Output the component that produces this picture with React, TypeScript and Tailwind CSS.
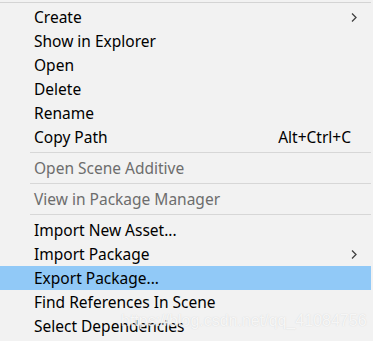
import React from "react";

type Item =
  | { kind: "item"; label: string; disabled?: boolean; shortcut?: string; sub?: boolean; active?: boolean }
  | { kind: "sep" };

const items: Item[] = [
  { kind: "item", label: "Create", sub: true },
  { kind: "item", label: "Show in Explorer" },
  { kind: "item", label: "Open" },
  { kind: "item", label: "Delete" },
  { kind: "item", label: "Rename" },
  { kind: "item", label: "Copy Path", shortcut: "Alt+Ctrl+C" },
  { kind: "sep" },
  { kind: "item", label: "Open Scene Additive", disabled: true },
  { kind: "sep" },
  { kind: "item", label: "View in Package Manager", disabled: true },
  { kind: "sep" },
  { kind: "item", label: "Import New Asset..." },
  { kind: "item", label: "Import Package", sub: true },
  { kind: "item", label: "Export Package...", active: true },
  { kind: "item", label: "Find References In Scene" },
  { kind: "item", label: "Select Dependencies" },
];

function Chevron() {
  return (
    <svg width="6" height="9" viewBox="0 0 6 9" className="block">
      <path d="M1 0.5 L5 4.5 L1 8.5" fill="none" stroke="#404040" strokeWidth="1.3" />
    </svg>
  );
}

export default function App() {
  return (
    <div
      className="relative w-[373px] h-[341px] overflow-hidden bg-[#f2f2f2] text-[15.5px] text-black"
      style={{ fontFamily: '"Noto Sans", "Open Sans", sans-serif' }}
    >
      <div className="w-[371px] pt-[2px]">
        <div className="h-px bg-[#d4d4d4]" />
        <div className="h-[2px]" />
        {items.map((it, i) =>
          it.kind === "sep" ? (
            <div key={i} className="h-[7px] flex items-center pl-[30px]">
              <div className="h-px w-full bg-[#d7d7d7]" />
            </div>
          ) : (
            <div
              key={i}
              className={`h-[24px] flex items-center pl-[34px] pr-[20px] ${it.active ? "bg-[#91c9f7]" : ""}`}
            >
              <span className={`flex-1 leading-none pt-[2px] ${it.disabled ? "text-[#6d6d6d]" : ""}`}>{it.label}</span>
              {it.shortcut && <span className="leading-none pt-[2px]">{it.shortcut}</span>}
              {it.sub && (
                <span className="mr-[-6px]">
                  <Chevron />
                </span>
              )}
            </div>
          )
        )}
      </div>
      <div
        className="absolute left-[121px] top-[313px] text-[16px] text-white/80 leading-none"
        style={{ fontFamily: '"Liberation Sans", Arial, sans-serif', textShadow: "0 0 1px rgba(180,180,180,0.6)" }}
      >
        https://blog.csdn.net/qq_41084756
      </div>
    </div>
  );
}
